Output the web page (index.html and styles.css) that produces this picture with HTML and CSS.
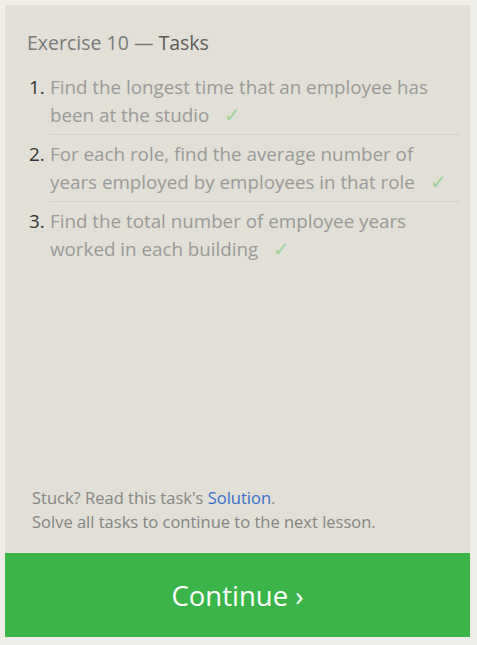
FILE: index.html
```html
<!DOCTYPE html>
<html>
<head>
<meta charset="utf-8">
<link rel="stylesheet" href="styles.css">
</head>
<body>
<div class="panel">
  <div class="content">
    <h2 class="title"><span class="ex">Exercise 10 — </span><span class="tasks">Tasks</span></h2>
    <ol class="task-list">
      <li><span class="num">1.</span><div class="txt">Find the longest time that an employee has<br>been at the studio <span class="check">✓</span></div></li>
      <li><span class="num">2.</span><div class="txt">For each role, find the average number of<br>years employed by employees in that role <span class="check">✓</span></div></li>
      <li><span class="num">3.</span><div class="txt">Find the total number of employee years<br>worked in each building <span class="check">✓</span></div></li>
    </ol>
  </div>
  <div class="footer">
    <p>Stuck? Read this task's <a class="link">Solution</a>.</p>
    <p>Solve all tasks to continue to the next lesson.</p>
  </div>
  <div class="continue">Continue ›</div>
</div>
</body>
</html>
```
FILE: styles.css
```css
html, body {
  margin: 0;
  padding: 0;
  background: #efede7;
}
body {
  padding: 5px 0 0 5px;
  font-family: "Open Sans", "Noto Sans", sans-serif;
}
.panel {
  width: 465px;
  height: 632px;
  background: #e1dfd6;
  display: flex;
  flex-direction: column;
}
.content {
  flex: 1;
  padding: 26px 10px 0 22px;
}
.title {
  margin: 0 0 18px 0;
  font-weight: normal;
  font-size: 19.5px;
  line-height: 24px;
}
.ex { color: #7a7a78; }
.tasks { color: #5c5c5a; }
.task-list {
  list-style: none;
  margin: 0;
  padding: 0;
}
.task-list li {
  display: flex;
  font-size: 18.8px;
  line-height: 28px;
}
.num {
  width: 21px;
  padding-left: 2px;
  flex: none;
  color: #333;
}
.txt {
  flex: 1;
  white-space: nowrap;
  color: #9a9a96;
  border-bottom: 1px solid #d3d1c8;
  padding-bottom: 5px;
  margin-bottom: 5px;
}
.task-list li:last-child .txt { border-bottom: none; }
.check {
  color: #9ad49a;
  font-size: 20px;
  margin-left: 10px;
}
.footer {
  padding: 0 0 19px 27px;
  font-size: 16.5px;
  line-height: 24px;
  color: #858582;
}
.footer p { margin: 0; }
.link { color: #3a6fd0; }
.continue {
  height: 84px;
  flex: none;
  background: #3bb54a;
  color: #fff;
  font-size: 27.5px;
  display: flex;
  align-items: center;
  justify-content: center;
}
```
